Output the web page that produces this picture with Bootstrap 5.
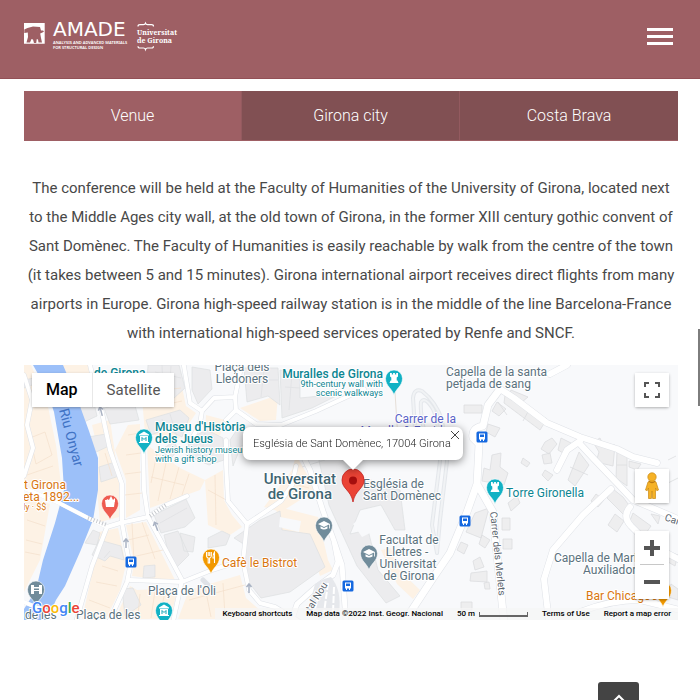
<!DOCTYPE html>
<html lang="en">
<head>
<meta charset="utf-8">
<meta name="viewport" content="width=device-width, initial-scale=1">
<title>AMADE – Venue</title>
<link href="https://cdn.jsdelivr.net/npm/bootstrap@5.3.0/dist/css/bootstrap.min.css" rel="stylesheet">
<style>
  body { font-family: Roboto, "Noto Sans", sans-serif; font-weight: 300; color: #333; background: #fff; }
  .site-header { background: #9e5f64; border-bottom: 1px solid #935056; padding: 20px 27px 24px 24px; }
  .brand-logo { width: 160px; height: 34px; display: block; }
  .menu-toggle { width: 26px; height: 34px; background: none; border: 0; padding: 0; }
  .menu-toggle svg { display: block; }
  .venue-main { padding: 12px 22px 0 24px; }
  .venue-tabs { background: #815053; border-bottom: 1px solid #9e5f64; }
  .venue-tabs .nav-link { color: #fff; font-size: 16px; line-height: 24px; padding: 13px 8px 12px; border-radius: 0; font-weight: 300; border-right: 1px solid #935a5f; }
  .venue-tabs .nav-item:last-child .nav-link { border-right: 0; }
  .venue-tabs .nav-link.active { background: #9e5f64; color: #fff; }
  .venue-text { font-size: 15px; font-weight: 400; color: #484848; line-height: 29px; margin: 33px 0 17px; padding: 0 2px; text-align: center; }
  .map-box { height: 255px; overflow: hidden; background: #f8f9fa; }
  .map-canvas { width: 100%; height: 100%; display: block; }
  .map-canvas text { font-family: Roboto, sans-serif; font-weight: 400; font-size: 12px; paint-order: stroke; stroke: #fff; stroke-width: 2px; stroke-linejoin: round; }
  .map-canvas .lb-teal { fill: #0c8592; }
  .map-canvas .lb-slate { fill: #5b727e; }
  .map-canvas .lb-univ { fill: #3f6572; font-size: 15px; font-weight: 500; }
  .map-canvas .lb-food { fill: #d9760f; }
  .map-canvas .lb-stop { fill: #5a63c8; }
  .map-canvas .lb-street { fill: #5c6670; font-size: 10px; }
  .map-canvas .lb-water { fill: #4173c5; font-size: 14px; stroke: none; }
  .map-canvas .lb-bold { font-weight: 500; }
  .map-canvas .lb-note { font-size: 9px; }
  .map-canvas .lb-google { font-size: 15px; font-weight: 500; stroke-width: 2px; }
  .map-btn { background: #fff; border: 0; padding: 0; color: #565656; }
  .map-ctl { box-shadow: 0 1px 3px rgba(0,0,0,.3); border-radius: 2px; background: #fff; }
  .map-types { top: 8px; left: 8px; }
  .map-types .map-btn { height: 34px; padding: 0 14px; font-size: 15px; font-weight: 400; }
  .map-types .map-btn.is-on { color: #000; font-size: 16px; font-weight: 500; border-right: 1px solid #e8e8e8; }
  .map-side { top: 8px; right: 9px; width: 34px; }
  .map-side .map-btn { width: 34px; height: 34px; display: flex; align-items: center; justify-content: center; }
  .side-peg { margin-top: 62px; }
  .side-zoom { margin-top: 28px; }
  .side-zoom hr { margin: 0 5px; border-color: #c8c8c8; opacity: 1; height: 0; }
  .side-zoom .map-btn:first-child { height: 33px; }
  .info-win { top: 62px; left: 50%; margin-left: 2px; transform: translateX(-50%); background: #fff; color: #222; border-radius: 7px; width: 220px; height: 33px; padding: 0 10px; font-size: 11px; line-height: 33px; white-space: nowrap; filter: drop-shadow(0 2px 4px rgba(0,0,0,.45)); }
  .info-win::after { content: ""; position: absolute; left: 50%; top: 100%; margin-left: -10px; border: 10px solid transparent; border-top-color: #fff; border-bottom: 0; }
  .info-close { position: absolute; top: 4px; right: 4px; width: 8px; height: 8px; border: 0; background: none; padding: 0; line-height: 0; }
  .map-foot { bottom: 0; right: 0; font-size: 8px; line-height: 12px; height: 12px; color: #000; }
  .map-foot > * { background: rgba(245,245,245,.75); padding: 0 7px; color: #000; border: 0; font-weight: 500; line-height: 12px; white-space: nowrap; text-decoration: none; }
  .scale-bar { width: 49px; height: 5px; border: 2px solid #666; border-top: 0; border-left-width: 1px; border-right-width: 1px; }
  .scroll-thumb { right: 0; top: 329px; width: 2px; height: 77px; background: #7d7d7d; position: fixed; }
  .to-top { position: fixed; right: 61px; bottom: -22px; width: 41px; height: 40px; background: #444; border: 0; border-radius: 3px; padding: 0; line-height: 0; }
  .to-top svg { display: block; margin: 0 auto 8px; }
</style>
<script src="https://cdn.jsdelivr.net/npm/bootstrap@5.3.0/dist/js/bootstrap.bundle.min.js"></script>
</head>
<body>
<header class="site-header d-flex justify-content-between align-items-start">
  <a href="#" aria-label="AMADE, Universitat de Girona">
    <svg class="brand-logo" viewBox="24 20 160 34" fill="#fff">
      <path fill-rule="evenodd" d="M23.500 23H44.700V43.700H23.500ZM24.300 29.500L24.300 33L27.800 32.500L28 37L26.500 42.500H30L31.500 39L33 39.500L34 43H36.200L36.800 39L38 39.500L38.500 42.500H42L41 38L40.200 33.500L42.500 32.500L44 31.500L43 30.500L41 30.500L40 27L33 26.500L27.500 28Z"/>
      <text x="53" y="36" font-family="DejaVu Sans, sans-serif" font-size="20" font-weight="400">AMADE</text>
      <g font-family="Noto Sans, sans-serif" font-weight="600" font-size="4">
        <text x="53" y="44">ANALYSIS AND ADVANCED MATERIALS</text>
        <text x="53" y="49">FOR STRUCTURAL DESIGN</text>
      </g>
      <g font-family="Noto Serif, DejaVu Serif, Liberation Serif, serif" font-weight="700" font-size="7">
        <text x="137" y="35">Universitat</text>
        <text x="137" y="43">de Girona</text>
      </g>
      <path d="M138 26.500Q138 24.700 140 24.700H143.500Q145 24.700 145.500 23.300Q146 24.700 147.500 24.700H151.500Q153.500 24.700 153.500 26.500M138 46.200Q138 48 140 48H143.500Q145 48 145.500 49.500Q146 48 147.500 48H151.500Q153.500 48 153.500 46.200" fill="none" stroke="#fff" stroke-width="1.200"/>
    </svg>
  </a>
  <button class="menu-toggle" type="button" aria-label="Menu">
    <svg width="26" height="34" fill="#fff"><path d="M0 8h26v3H0zM0 15h26v3H0zM0 22h26v3H0z"/></svg>
  </button>
</header>

<main class="venue-main">
  <ul class="venue-tabs nav nav-pills nav-fill">
    <li class="nav-item col-4"><a class="nav-link active" href="#venue">Venue</a></li>
    <li class="nav-item col-4"><a class="nav-link" href="#girona">Girona city</a></li>
    <li class="nav-item col-4"><a class="nav-link" href="#costa">Costa Brava</a></li>
  </ul>

  <p class="venue-text">The conference will be held at the Faculty of Humanities of the University of Girona, located next to the Middle Ages city wall, at the old town of Girona, in the former XIII century gothic convent of Sant Domènec. The Faculty of Humanities is easily reachable by walk from the centre of the town (it takes between 5 and 15 minutes). Girona international airport receives direct flights from many airports in Europe. Girona high-speed railway station is in the middle of the line Barcelona-France with international high-speed services operated by Renfe and SNCF.</p>

  <section class="map-box position-relative" aria-label="Map">
    <svg class="map-canvas" viewBox="24 365 654 255" preserveAspectRatio="xMidYMid slice">
      <defs>
        <g id="pin"><path d="M0 0C-1.500-6-8.500-9-8.500-16.500A8.500 8.500 0 0 1 8.500-16.500C8.500-9 1.500-6 0 0Z" stroke="#fff" stroke-width=".6"/></g>
        <g id="cap" fill="#fff"><path d="M0-21L-6-18L0-15L6-18ZM-3.500-15.800V-13.500Q0-11.300 3.500-13.500V-15.800L0-14ZM5.200-17.500V-13.500H6V-18Z"/></g>
        <g id="tower" fill="#fff"><path d="M-4-22H-2.200V-20.500H-.9V-22H.9V-20.500H2.200V-22H4V-18.500L2.700-17.500V-14.500H3.500L4.500-12H-4.500L-3.500-14.500H-2.700V-17.500L-4-18.500Z"/></g>
        <g id="museum" fill="#fff"><path d="M0-22.500L5-19.500V-18.500H-5V-19.500ZM-4-18H4V-12H-4ZM-5-12H5V-11H-5Z"/><path d="M-2-13V-16.500L0-14.500L2-16.500V-13" fill="none" stroke="#12a5b8"/></g>
        <g id="bus"><rect x="-5.500" y="-5.500" width="11" height="11" rx="1.500" fill="#1669e0"/><path d="M-3-3.500H3V2.500H2V4H1V2.500H-1V4H-2V2.500H-3Z" fill="#fff"/><path d="M-2-2.500H2V0H-2Z" fill="#1669e0"/></g>
        <path id="arrow" d="M0 5V-4M-2.500-1L0-4L2.500-1" fill="none" stroke="#a9b2c3" stroke-width="1.500"/>
        <g id="roads" fill="none" stroke-linejoin="round" stroke-linecap="round">
          <path d="M96 395L101 408L110 450L122 484L122 523L130 567L127 582L109 622M107 527L92 566L76 622M107 527L120 523L148 517L166 505L187 496M130 580L182 582L212 570L234 563M143 440L144 490L148 517L182 580L173 622M90 365L97 395M24 375L32 400L27 425L33 448L24 476" stroke-width="5"/>
          <path d="M183 360L190 403L202 411L214 398L235 397L236 410L256 424L281 425L316 411L342 399L364 389M235 397L240 372L240 360M202 411L200 424L190 442M226 440L226 464L228 501L247 524L243 561L249 590L260 603L275 607L300 622M247 524L265 512L281 501L292 485L296 466M236 410L226 420M203 580L213 590" stroke-width="5"/>
          <path d="M289 440L300 450L310 470L323 511L334 541L342 565L346 622M334 541L338 562L333 575L315 588L297 604L291 622" stroke-width="6"/>
          <path d="M415 428L413 398Q414 388 422 391Q436 402 442 420L447 461L440 520L437 553M424 430Q420 412 421 402Q425 396 433 409Q440 425 440 461L432 525L437 553" stroke-width="4" opacity=".8"/>
          <path d="M500 389L488 405L483 426Q471 428 473 438L479 444L477 484L467 512L450 553L433 578L404 622M477 484L493 512L496 545L504 622" stroke-width="8"/>
          <path d="M500 389L514 398L547 423L580 437L617 449L633 457L657 463M550 374L567 365M580 441L567 450L557 470M580 444L594 459L617 483L633 500L657 510L680 520M611 489L583 515L553 550L544 579L549 622M630 507Q622 516 631 526L648 543L680 560M580 612Q610 600 640 600L680 610" stroke-width="7"/>
          <path d="M24 488L59 503L92 520L107 527M24 602L50 613" stroke-width="4"/>
        </g>
      </defs>
      <rect x="24" y="365" width="654" height="255" fill="#f8f9fb"/>
      <!-- old town blocks -->
      <path fill="#fdf2e5" d="M24 365H31L47 402L56 445L61 484L24 490ZM24 495L50 504L40 560L24 592ZM92 425L110 420L119 480L119 517L100 522L97 490L99 455ZM99 532L118 528L126 564L120 590L106 619H82L90 583ZM128 425L140 424L140 510L126 518L126 480L115 450ZM126 525L146 522L176 582L132 576L134 562ZM137 590L178 588L170 619H115L130 586ZM147 445L180 468L205 480L200 490L150 508ZM189 590L240 575L246 598L270 619H178ZM205 480L223 470L224 500L232 515L242 527L230 535L208 525ZM264 507L292 470L296 455L316 490L281 512ZM60 365H88L97 390L80 402ZM140 375L180 378L186 406L196 413L178 440L145 433ZM206 415L225 420L220 435L205 438ZM275 506L318 517L328 560L333 570L320 576L308 540L282 530ZM240 408L278 395L276 420L260 421Z"/>
      <path fill="#ececee" stroke="#dddfe1" stroke-width=".7" d="M24 380L34 378L35 384L24 388ZM80 407L94 403L97 416L84 422ZM88 437L106 434L109 446L94 453ZM92 555L99 540L121 546L124 560L110 556L105 561ZM85 543L93 530L100 533L97 545ZM104 408L134 402L139 420L110 424ZM99 467L115 462L119 476L101 482ZM146 420L180 410L189 418L182 437L166 429L151 435ZM154 515L186 499L195 518L185 527L161 533ZM164 535L178 531L189 555L176 568L169 556ZM180 533L195 537L193 552L184 551ZM190 438L207 430L223 438L224 460L209 465L186 455ZM148 365H179L185 388L173 399L158 387L147 382ZM192 367L210 370L212 389L198 404L192 390ZM244 368L278 368L280 405L268 396L247 402ZM280 370L300 375L300 398L340 394L312 408L282 418ZM208 538L222 531L230 535L226 545L208 548ZM234 538L260 520L280 511L282 530L310 534L325 567L290 592L261 598L247 580L245 545ZM318 456L349 451L348 463L362 477L400 490L405 530L395 530L381 505L360 510L350 534L368 530L378 570L400 596L386 603L357 566L329 505ZM238 428L280 430L278 443L241 446L233 466L230 440ZM122 589L133 588L141 605L125 616ZM144 566L155 565L155 577L143 578ZM174 441L178 450L171 458L160 451Z"/>
      <path fill="#f8f9fb" d="M280 517L301 521L299 532L279 527ZM353 524L370 509L384 526L362 537Z"/>
      <path fill="#fdf2e5" d="M381 550L391 548L397 568L420 590L413 599L397 584Z"/>
      <path fill="none" stroke="#f3dfcc" stroke-width=".7" d="M30 438L45 432L52 455L36 464ZM27 475L53 466M34 392L45 388M27 520L45 526M26 540L42 544M25 552L40 555M103 425L108 440M105 453L112 476M128 435L140 433M126 455L141 453M125 474L141 472M125 495L142 493M132 523L134 561M142 522L155 559M128 540L149 535M132 557L163 550M102 566L118 571M96 582L117 586M89 600L110 608M140 594L138 616M155 591L151 618M165 592L160 615M157 453L151 483M167 458L158 501M179 467L170 499M189 474L182 495M151 477L184 485M208 490L230 502M215 475L216 525M189 600L245 585M205 587L211 617M223 583L225 616M278 490L299 497M283 481L309 488M158 380L164 405L182 401M147 392L181 388"/>
      <path fill="none" stroke="#dedfe2" stroke-width=".7" d="M155 372L181 378M162 365L163 388M171 366L169 395M250 380L278 380M264 369L261 397M285 387L300 388M292 373L289 410M162 419L165 430M170 414L177 437M160 523L187 508M205 433L201 458M191 447L223 450M302 467L325 460M308 480L333 474M110 551L104 558M286 430L297 443M249 435L278 435"/>
      <!-- eastern hillside houses -->
      <path fill="#eeeeef" stroke="#dcdddf" stroke-width=".8" d="M464 405H482V413H464ZM511 390L528 397L522 402L508 397ZM505 395L547 419L540 430L504 403ZM498 402L507 415M530 408L523 421M497 402L506 409L499 416L492 411ZM488 424L500 428L495 437L486 432ZM492 455L501 453L500 467L508 473L504 485L482 481L484 468L490 470ZM545 442L552 438L557 444L549 454L541 449ZM561 438L571 443L563 453L558 450ZM542 455L550 453L552 463L544 464ZM523 458L530 463L527 467L521 463ZM545 470L553 475L548 481L542 475ZM579 452L589 465L575 486L568 480ZM570 467L588 475M593 442L600 438L603 445L615 445L613 466L596 462L599 452ZM617 451L627 454V486L616 478ZM617 465H627M629 461L641 464L637 470L629 467ZM475 513L489 508L481 538L466 532ZM502 518H510V530H502ZM503 539H512V549H503ZM482 535L490 540L485 548L479 544ZM473 561L480 557L484 567L475 570ZM471 573L487 571L487 582L470 581ZM484 583L489 582L490 589L485 589ZM613 489L623 497L631 508L625 516L607 498ZM615 514L624 521L617 532L608 525ZM633 513L651 526L644 536L629 523ZM651 514L660 516L658 524ZM667 551L678 555L675 566L668 562ZM668 460L676 456M461 542L468 545L464 554L457 550ZM461 602H472V610H461ZM596 494L604 500L598 507L591 501ZM640 545L651 552L645 559L638 555ZM664 485L678 478M671 584L678 589V600L668 597ZM508 503L517 496L520 503L511 511Z"/>
      <path fill="#9cc0f9" d="M33 365H63L77 398L89 431L98 458L98 490L93 520L80 552L65 586L56 600L47 620H24V609L36 590L43 560L55 523L64 490L62 458L54 412L46 388Z"/>
      <use href="#roads" stroke="#dfe2e7"/>
      <g id="road-fill" fill="none" stroke="#fff" stroke-linejoin="round" stroke-linecap="round">
        <path d="M96 395L101 408L110 450L122 484L122 523L130 567L127 582L109 622M107 527L92 566L76 622M107 527L120 523L148 517L166 505L187 496M130 580L182 582L212 570L234 563M143 440L144 490L148 517L182 580L173 622M90 365L97 395M24 375L32 400L27 425L33 448L24 476M183 360L190 403L202 411L214 398L235 397L236 410L256 424L281 425L316 411L342 399L364 389M235 397L240 372L240 360M202 411L200 424L190 442M226 440L226 464L228 501L247 524L243 561L249 590L260 603L275 607L300 622M247 524L265 512L281 501L292 485L296 466M236 410L226 420M24 488L59 503L92 520L107 527M24 602L50 613" stroke-width="4"/>
        <path d="M289 440L300 450L310 470L323 511L334 541L342 565L346 622M334 541L338 562L333 575L315 588L297 604L291 622" stroke-width="5"/>
        <path d="M415 428L413 398Q414 388 422 391Q436 402 442 420L447 461L440 520L437 553M424 430Q420 412 421 402Q425 396 433 409Q440 425 440 461L432 525L437 553" stroke="#f1f3f5" stroke-width="2"/>
        <path d="M500 389L488 405L483 426Q471 428 473 438L479 444L477 484L467 512L450 553L433 578L404 622M477 484L493 512L496 545L504 622" stroke-width="7"/>
        <path d="M500 389L514 398L547 423L580 437L617 449L633 457L657 463M550 374L567 365M580 441L567 450L557 470M580 444L594 459L617 483L633 500L657 510L680 520M611 489L583 515L553 550L544 579L549 622M630 507Q622 516 631 526L648 543L680 560M580 612Q610 600 640 600L680 610" stroke-width="6"/>
      </g>
      <path d="M315 584Q322 579 331 577Q342 590 339 613L320 619L309 606Z" fill="#e6e8ec"/>
      <path d="M321 586L315 609M328 583L324 613M334 587L333 613" stroke="#fff" stroke-width="2" stroke-dasharray="7 2"/>
      <path d="M88 518L107 525M150 516L166 505" stroke="#c6c9ce" stroke-width="4" stroke-dasharray="1 2"/>
      <path d="M395 392L398 440" stroke="#e6dfd8" fill="none"/>
      <use href="#arrow" x="126" y="543"/><use href="#arrow" x="156" y="526" transform="rotate(-20 156 526)"/><use href="#arrow" x="249" y="588"/><use href="#arrow" x="101" y="411" transform="rotate(-15 101 411)"/>

      <use href="#bus" x="131" y="562"/><use href="#bus" x="482" y="437"/><use href="#bus" x="465" y="521"/><use href="#bus" x="348" y="586"/>
      <g fill="#12b1c4">
        <use href="#pin" x="144" y="454"/><use href="#pin" x="394" y="395"/><use href="#pin" x="495" y="504"/><use href="#pin" x="164" y="627"/>
      </g>
      <use href="#museum" x="144" y="454"/><use href="#museum" x="164" y="627"/><use href="#tower" x="394" y="395"/><use href="#tower" x="495" y="504"/>
      <g fill="#718c9b"><use href="#pin" x="324" y="542"/><use href="#pin" x="369" y="570"/><use href="#pin" x="36" y="606"/></g>
      <use href="#cap" x="324" y="542"/><use href="#cap" x="369" y="570"/>
      <path d="M31 594V585H34V587H39V585H42V594H39V591H34V594ZM34 588.500V590H39V588.500Z" fill="#fff" fill-rule="evenodd"/>
      <use href="#pin" x="110" y="520" fill="#ee5b50"/>
      <path d="M105 500H115L114 507H106ZM107 499L109 500L111 496L113 500L115 498L115 502H106Z" fill="#fff"/>
      <use href="#pin" x="211" y="574" fill="#f29900"/>
      <path d="M206.500 552V556Q207 558 208.200 558V563H209.600V558Q211 558 211.300 556V552M208.200 552V556M209.700 552V556M214.500 563V552Q212.800 554 213 558H214.500" fill="none" stroke="#fff" stroke-width="1.100"/>
      <use href="#pin" x="663" y="607" fill="#f29900"/>

      <g class="map-labels">
        <text class="lb-teal lb-bold" x="94" y="377">de Girona</text>
        <text class="lb-slate" x="242" y="371" text-anchor="middle">Plaça dels</text>
        <text class="lb-slate" x="242" y="383" text-anchor="middle">Lledoners</text>
        <text class="lb-teal lb-bold" x="383" y="378" text-anchor="end">Muralles de Girona</text>
        <text class="lb-teal lb-note" x="383" y="387" text-anchor="end">9th-century wall with</text>
        <text class="lb-teal lb-note" x="383" y="396" text-anchor="end">scenic walkways</text>
        <text class="lb-slate" x="446" y="376">Capella de la santa</text>
        <text class="lb-slate" x="446" y="388">petjada de sang</text>
        <text class="lb-stop" x="456" y="423" text-anchor="end">Carrer de la</text>
        <text class="lb-stop" x="456" y="435" text-anchor="end">Muralla &amp; Escideo</text>
        <text class="lb-teal lb-bold" x="155" y="431">Museu d'Història</text>
        <text class="lb-teal lb-bold" x="155" y="443">dels Jueus</text>
        <text class="lb-teal lb-note" x="155" y="453">Jewish history museum</text>
        <text class="lb-teal lb-note" x="155" y="462">with a gift shop</text>
        <text class="lb-food" x="24" y="489">t Girona</text>
        <text class="lb-food" x="23" y="501">eta 1892...</text>
        <text class="lb-food lb-note" x="23" y="510">ly · $$</text>
        <text class="lb-univ" x="336" y="484" text-anchor="end">Universitat</text>
        <text class="lb-univ" x="332" y="499" text-anchor="end">de Girona</text>
        <text class="lb-slate" x="363" y="488">Església de</text>
        <text class="lb-slate" x="363" y="500">Sant Domènec</text>
        <text class="lb-teal" x="506" y="497">Torre Gironella</text>
        <g class="lb-slate"><text x="409" y="544" text-anchor="middle">Facultat de</text><text x="407" y="556" text-anchor="middle">Lletres -</text><text x="408" y="568" text-anchor="middle">Universitat</text><text x="409" y="580" text-anchor="middle">de Girona</text></g>
        <text class="lb-food" x="222" y="567">Cafè le Bistrot</text>
        <text class="lb-slate" x="148" y="595">Plaça de l'Oli</text>
        <text class="lb-slate" x="76" y="619">Plaça de les</text>
        <text class="lb-slate" x="25" y="619">de les</text>
        <text class="lb-slate" x="554" y="562">Capella de Maria</text>
        <text class="lb-slate" x="583" y="574">Auxiliadora</text>
        <text class="lb-food" x="586" y="600">Bar Chicago's</text>
        <text class="lb-water" transform="translate(59 410) rotate(75)">Riu Onyar</text>
        <text class="lb-street" transform="translate(490 512) rotate(84)">Carrer dels Merlets</text>
        <text class="lb-street" transform="translate(311 612) rotate(-58)">tal Nou</text>
        <text class="lb-street" transform="translate(664 520) rotate(20)">Carrer</text>
        <text class="lb-google" x="32" y="613"><tspan fill="#4285f4">G</tspan><tspan fill="#ea4335">o</tspan><tspan fill="#fbbc05">o</tspan><tspan fill="#4285f4">g</tspan><tspan fill="#34a853">l</tspan><tspan fill="#ea4335">e</tspan></text>
      </g>
      <path d="M353 502C351 490 342 489 342 480A11 11 0 0 1 364 480C364 489 355 490 353 502Z" fill="#ea4335" stroke="#c5221f" stroke-width=".8"/>
      <circle cx="353" cy="480.500" r="4" fill="#a50e0e"/>
    </svg>

    <div class="map-types map-ctl position-absolute d-flex">
      <button class="map-btn is-on" type="button">Map</button>
      <button class="map-btn" type="button">Satellite</button>
    </div>

    <div class="map-side position-absolute">
      <div class="map-ctl"><button class="map-btn" type="button" aria-label="Toggle fullscreen view">
        <svg width="16" height="16" fill="none" stroke="#555" stroke-width="2"><path d="M1 5V1H5M11 1H15V5M15 11V15H11M5 15H1V11"/></svg></button></div>
      <div class="map-ctl side-peg"><button class="map-btn" type="button" aria-label="Street View">
        <svg width="16" height="28" viewBox="0 0 16 28"><path d="M4 10Q8 7 12 10L14.500 18L12.800 18.700L11.500 16V26.500H8.600L8 19L7.400 26.500H4.500V16L3.200 18.700L1.500 18Z" fill="#f6b226" stroke="#c98a15" stroke-width=".7"/><circle cx="8" cy="5" r="4.200" fill="#f6b226" stroke="#c98a15" stroke-width=".7"/><path d="M4.500 9Q8 12.500 11.500 9" fill="none" stroke="#b5710d"/></svg></button></div>
      <div class="map-ctl side-zoom">
        <button class="map-btn" type="button" aria-label="Zoom in"><svg width="16" height="16" stroke="#555" stroke-width="4"><path d="M0 8H16M8 0V16"/></svg></button>
        <hr>
        <button class="map-btn" type="button" aria-label="Zoom out"><svg width="16" height="16" stroke="#555" stroke-width="4"><path d="M0 8H16"/></svg></button>
      </div>
    </div>

    <div class="info-win position-absolute">Església de Sant Domènec, 17004 Girona
      <button class="info-close" type="button" aria-label="Close"><svg width="8" height="8" stroke="#444" stroke-width="1"><path d="M0 0L8 8M8 0L0 8"/></svg></button>
    </div>

    <div class="map-foot position-absolute d-flex">
      <button type="button">Keyboard shortcuts</button>
      <span>Map data ©2022 Inst. Geogr. Nacional</span>
      <span class="d-flex align-items-center gap-1">50 m <i class="scale-bar"></i></span>
      <a href="#terms">Terms of Use</a>
      <a href="#report">Report a map error</a>
    </div>
  </section>
</main>

<div class="scroll-thumb"></div>
<button class="to-top" type="button" aria-label="Back to top"><svg width="12" height="8" fill="none" stroke="#fff" stroke-width="2"><path d="M1 7L6 2L11 7"/></svg></button>
</body>
</html>
